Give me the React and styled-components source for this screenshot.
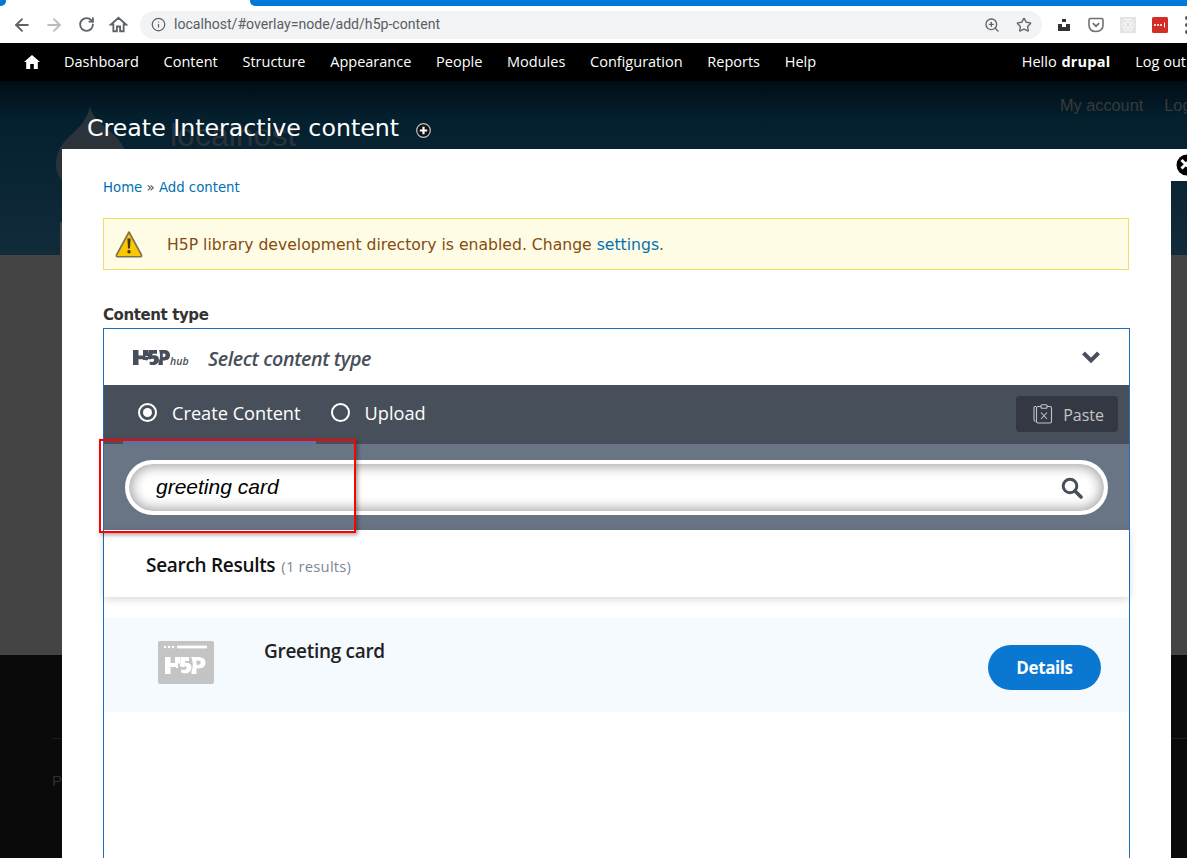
import React from 'react';
import styled, { createGlobalStyle } from 'styled-components';
import { ArrowLeft, ArrowRight, RotateCw, Info, ZoomIn, Star } from 'lucide-react';

const GlobalStyle = createGlobalStyle`
  html, body {
    margin: 0;
    padding: 0;
    height: 858px;
    overflow: hidden;
    background: #0a0a0a;
  }
  * { box-sizing: border-box; }
`;

const navItems = ['Dashboard', 'Content', 'Structure', 'Appearance', 'People', 'Modules', 'Configuration', 'Reports', 'Help'];

const HomeSolid = () => (
  <svg width="16" height="14" viewBox="0 0 16 14">
    <path fill="#fff" d="M8 0 L16 7 L13.8 7 L13.8 14 L9.8 14 L9.8 9 L6.2 9 L6.2 14 L2.2 14 L2.2 7 L0 7 Z" />
  </svg>
);

const HomeOutline = () => (
  <svg width="19" height="19" viewBox="0 0 24 24" fill="none" stroke="#5f6368" strokeWidth="2.3" strokeLinejoin="miter">
    <path d="M10 20.5V14.5H14V20.5H18.5V12H21.5L12 3.5L2.5 12H5.5V20.5Z" />
  </svg>
);

const PlusCircle = () => (
  <svg width="15" height="15" viewBox="0 0 15 15">
    <circle cx="7.5" cy="7.5" r="6.8" fill="#111" stroke="#c4c4c4" strokeWidth="1.2" />
    <path d="M7.5 3.8V11.2M3.8 7.5H11.2" stroke="#fff" strokeWidth="2.2" />
  </svg>
);

const CloseIcon = () => (
  <svg width="26" height="26" viewBox="0 0 26 26">
    <circle cx="11" cy="12" r="10.5" fill="#000" />
    <path d="M5.5 7L14 15.5M14 7L5.5 15.5" stroke="#fff" strokeWidth="3" />
  </svg>
);

const WarningIcon = () => (
  <svg width="28" height="27" viewBox="0 0 28 27">
    <path d="M14 1 L26.5 24 Q27 25.7 25.5 25.7 L2.5 25.7 Q1 25.7 1.5 24 Z" fill="#fdc700" stroke="#7a7550" strokeWidth="1.6" strokeLinejoin="round" />
    <path d="M12.4 7.5H15.6L15 17.5H13Z" fill="#3a3a2a" />
    <circle cx="14" cy="20.8" r="1.7" fill="#3a3a2a" />
  </svg>
);

const DrupalDrop = () => (
  <svg width="80" height="90" viewBox="0 0 80 90">
    <path fill="#2a3339" d="M34 0C36 12 46 18 56 27C66 36 72 46 72 58C72 76 54 90 36 90C18 90 0 76 0 58C0 46 6 37 15 29C24 21 32 12 34 0Z" />
  </svg>
);

const HubLogo = () => (
  <svg width="58" height="20" viewBox="0 0 58 20">
    <path fill="#474f5a" d="M0 2H5.5V7.6H10V2H15V8H12.5V12H10V11.2H5.5V17H0Z" />
    <path fill="#474f5a" d="M15.5 2H24V5.8H19.6L19.3 7.6C22.6 6.6 26 8 26 11.6C26 15.6 22.5 17.6 18.6 17L16.5 16.4L16.8 13.4C18.6 14.2 21 14.2 21.2 12C21.3 10.4 18.8 10.2 16.8 11.4L14.5 10.6Z" />
    <circle cx="13.5" cy="10.6" r="1.9" fill="#474f5a" />
    <path fill="#474f5a" d="M26 2H31C35 2 37 4 37 7.2C37 10.6 34.8 12.4 31.5 12.4H29.8V17H25.5V13.5C27.5 11 27.5 6 26 2ZM29.8 5.4V9H30.4C31.8 9 32.6 8.4 32.6 7.2C32.6 6 31.8 5.4 30.4 5.4Z" />
    <text x="37" y="17" fontFamily="'Open Sans', sans-serif" fontSize="10.5" fontStyle="italic" fontWeight="600" fill="#474f5a">hub</text>
  </svg>
);

const LibraryIcon = () => (
  <svg width="56" height="43" viewBox="0 0 56 43">
    <rect x="0" y="0" width="56" height="43" rx="2" fill="#c4c4c4" />
    <circle cx="7" cy="6" r="1.3" fill="#fff" />
    <circle cx="11" cy="6" r="1.3" fill="#fff" />
    <circle cx="15" cy="6" r="1.3" fill="#fff" />
    <rect x="19" y="4.6" width="30" height="2.8" fill="#fff" />
    <path fill="#fff" d="M7 16H12.5V22H17V16H22V22.5H20V27H18V26H12.5V33H7Z" />
    <path fill="#fff" d="M22.5 16H31V20H27.2L27 22C30 21 33.5 22.4 33.5 26.2C33.5 30.4 30 32.6 26 32.2L23 31.4L23.4 28.2C25.4 29 28.5 29.2 28.7 27C28.8 25.4 26.5 25.2 24.4 26.2L22 25.2Z" />
    <path fill="#fff" d="M33 16H40C45 16 47.5 18.2 47.5 21.6C47.5 25.4 45 27.4 41 27.4H38.5V33H33.5V30C35.5 26 35 20 33 16ZM38.5 19.6V23.8H40C41.6 23.8 42.6 23.2 42.6 21.7C42.6 20.3 41.6 19.6 40 19.6Z" />
  </svg>
);

const PasteIcon = () => (
  <svg width="20" height="20" viewBox="0 0 20 20" fill="none" stroke="#c4c4c4" strokeWidth="1.1">
    <path d="M3 2.5H2Q1 2.5 1 3.5V15.5Q1 17 2.5 17.5" />
    <rect x="3.5" y="2.5" width="15" height="16.5" rx="1.5" />
    <rect x="8" y="0.7" width="6" height="3.6" rx="1" fill="#333842" />
    <path d="M8 8.5L14 15M14 8.5L8 15" />
  </svg>
);

const PocketIcon = () => (
  <svg width="16" height="16" viewBox="0 0 16 16">
    <path d="M1 3Q1 1.5 2.5 1.5H13.5Q15 1.5 15 3V8Q15 14.5 8 14.5Q1 14.5 1 8Z" fill="none" stroke="#707070" strokeWidth="1.6" />
    <path d="M4.8 6.2L8 9.2L11.2 6.2" fill="none" stroke="#707070" strokeWidth="1.8" />
  </svg>
);

const InboxIcon = () => (
  <svg width="14" height="14" viewBox="0 0 14 14">
    <path fill="#333" d="M5 1H9V4H5ZM1 7H5V9H9V7H13V13H1Z" />
    <path fill="#333" d="M1 6H5V7H1ZM9 6H13V7H9Z" />
  </svg>
);

const AtomIcon = () => (
  <svg width="16" height="16" viewBox="0 0 16 16">
    <rect width="16" height="16" fill="#e4e4e4" />
    <g fill="none" stroke="#f6f6f6" strokeWidth="1">
      <ellipse cx="8" cy="8" rx="6.5" ry="2.6" />
      <ellipse cx="8" cy="8" rx="6.5" ry="2.6" transform="rotate(60 8 8)" />
      <ellipse cx="8" cy="8" rx="6.5" ry="2.6" transform="rotate(120 8 8)" />
    </g>
  </svg>
);

const PassIcon = () => (
  <svg width="16" height="16" viewBox="0 0 16 16">
    <rect width="16" height="16" rx="1.5" fill="#d32d27" />
    <circle cx="3" cy="8" r="1.1" fill="#fff" />
    <circle cx="6" cy="8" r="1.1" fill="#fff" />
    <circle cx="9" cy="8" r="1.1" fill="#fff" />
    <rect x="12" y="5.5" width="1" height="5" fill="#fff" />
  </svg>
);

const ChevronIcon = () => (
  <svg width="20" height="14" viewBox="0 0 20 14" fill="none" stroke="#474f5a" strokeWidth="4">
    <path d="M2.5 3L10 10.5L17.5 3" />
  </svg>
);

const SearchIcon = () => (
  <svg width="22" height="22" viewBox="0 0 22 22" fill="none" stroke="#474f5a">
    <circle cx="9" cy="9" r="6.8" strokeWidth="3" />
    <path d="M14 14L20 20" strokeWidth="3.6" strokeLinecap="round" />
  </svg>
);

const App = () => (
  <>
    <GlobalStyle />
    <Page>
      <TabStrip>
        <TabCorner />
        <TabRest />
      </TabStrip>
      <Toolbar>
        <ToolIcon><ArrowLeft size={20} color="#5f6368" strokeWidth={2.3} /></ToolIcon>
        <ToolIcon><ArrowRight size={20} color="#bdbdbd" strokeWidth={2.3} /></ToolIcon>
        <ToolIcon><RotateCw size={17} color="#5f6368" strokeWidth={2.6} /></ToolIcon>
        <ToolIcon><HomeOutline /></ToolIcon>
        <Omnibox>
          <Info size={15} color="#5f6368" strokeWidth={2} />
          <Url>localhost/#overlay=node/add/h5p-content</Url>
          <OmniEnd>
            <ZoomIn size={16} color="#5f6368" strokeWidth={2} />
            <Star size={16} color="#5f6368" strokeWidth={2} />
          </OmniEnd>
        </Omnibox>
        <Extensions>
          <InboxIcon />
          <PocketIcon />
          <AtomIcon />
          <PassIcon />
        </Extensions>
        <MenuDots><i /><i /><i /></MenuDots>
      </Toolbar>

      <AdminBar>
        <AdminHome><HomeSolid /></AdminHome>
        {navItems.map((item) => <AdminLink key={item}>{item}</AdminLink>)}
        <AdminRight>
          <AdminLink>Hello <strong>drupal</strong></AdminLink>
          <AdminLink>Log out</AdminLink>
        </AdminRight>
      </AdminBar>

      <Backdrop>
        <SiteHeader>
          <SiteDrop><DrupalDrop /></SiteDrop>
          <SiteName>localhost</SiteName>
          <SiteLinks>
            <span>My account</span>
            <span>Log out</span>
          </SiteLinks>
          <HeaderTail />
        </SiteHeader>
        <GrayBand />
        <SiteFooter>
          <FooterRule />
          <FooterText>P</FooterText>
        </SiteFooter>
      </Backdrop>

      <OverlayTitle>Create Interactive content <PlusCircle /></OverlayTitle>
      <CloseTab><CloseIcon /></CloseTab>

      <Modal>
        <Breadcrumb><a>Home</a> » <a>Add content</a></Breadcrumb>
        <Message>
          <WarningIcon />
          <MessageText>H5P library development directory is enabled. Change <a>settings</a>.</MessageText>
        </Message>
        <FieldLabel>Content type</FieldLabel>
        <Hub>
          <HubHeader>
            <HubLogo />
            <HubTitle>Select content type</HubTitle>
            <ChevronIcon />
          </HubHeader>
          <TabBar>
            <RadioTab>
              <Radio $checked />
              Create Content
            </RadioTab>
            <RadioTab>
              <Radio />
              Upload
            </RadioTab>
            <PasteButton><PasteIcon /><PasteLabel>Paste</PasteLabel></PasteButton>
            <TabUnderline />
          </TabBar>
          <SearchBand>
            <SearchPill>
              <SearchValue>greeting card</SearchValue>
              <SearchIcon />
            </SearchPill>
          </SearchBand>
          <ResultsHead>
            Search Results <ResultCount>(1 results)</ResultCount>
          </ResultsHead>
          <ResultRow>
            <ResultIcon><LibraryIcon /></ResultIcon>
            <ResultName>Greeting card</ResultName>
            <DetailsButton>Details</DetailsButton>
          </ResultRow>
        </Hub>
      </Modal>

      <Callout />
    </Page>
  </>
);

const Page = styled.div`
  position: relative;
  width: 1187px;
  height: 858px;
  overflow: hidden;
  font-family: 'Open Sans', sans-serif;
`;

const TabStrip = styled.div`
  display: flex;
  justify-content: space-between;
  height: 6px;
  background: #fff;
`;

const TabCorner = styled.div`
  width: 6px;
  background: #0078d7;
  border-radius: 0 0 5px 0;
`;

const TabRest = styled.div`
  width: 937px;
  background: #0078d7;
  border-radius: 0 0 0 5px;
`;

const Toolbar = styled.div`
  display: flex;
  align-items: center;
  height: 37px;
  padding: 0 0 0 6px;
  background: #fff;
`;

const ToolIcon = styled.span`
  display: flex;
  flex: none;
  justify-content: center;
  width: 32px;
`;

const Omnibox = styled.div`
  display: flex;
  align-items: center;
  flex: none;
  width: 902px;
  height: 28px;
  margin-left: 6px;
  padding: 0 10px 0 11px;
  border-radius: 14px;
  background: #f1f3f4;
`;

const Url = styled.span`
  margin-left: 8px;
  padding-bottom: 2px;
  font: 14.1px 'Roboto', sans-serif;
  color: #5a5d62;
`;

const OmniEnd = styled.span`
  display: flex;
  align-items: center;
  gap: 16px;
  margin-left: auto;
`;

const Extensions = styled.div`
  display: flex;
  flex: none;
  align-items: center;
  gap: 16px;
  margin-left: 15px;

  svg:first-child { margin-right: 1px; }
`;

const MenuDots = styled.div`
  display: flex;
  flex: none;
  flex-direction: column;
  gap: 3px;
  margin-left: 17px;

  i {
    display: block;
    width: 4px;
    height: 4px;
    background: #555;
    border-radius: 50%;
  }
`;

const AdminBar = styled.nav`
  display: flex;
  align-items: center;
  height: 38px;
  padding: 0 0 2px 24px;
  background: #000;
  gap: 24.75px;
`;

const AdminHome = styled.span`
  display: flex;
  margin-right: -0.75px;
  padding-top: 2px;
`;

const AdminLink = styled.span`
  font: 14.5px 'Open Sans', sans-serif;
  color: #fff;
  white-space: nowrap;

  strong {
    margin-left: 1px;
    font-weight: 700;
    letter-spacing: 0.2px;
  }
`;

const AdminRight = styled.div`
  display: flex;
  gap: 25px;
  margin-left: auto;
  margin-right: 1px;
`;

const Backdrop = styled.div`
  display: flex;
  flex-direction: column;
  height: 777px;
`;

const SiteHeader = styled.header`
  position: relative;
  height: 174px;
  background: linear-gradient(#010d14, #04202f 22%, #122b3a 100%);
  overflow: hidden;
`;

const SiteDrop = styled.div`
  position: absolute;
  left: 56px;
  top: 25px;
  display: flex;
`;

const HeaderTail = styled.div`
  position: absolute;
  left: 60px;
  top: 141px;
  width: 2px;
  height: 33px;
  background: #444;
`;

const SiteName = styled.div`
  position: absolute;
  left: 170px;
  top: 36px;
  font: 32px 'Liberation Sans', sans-serif;
  color: #2b3238;
`;

const SiteLinks = styled.div`
  position: absolute;
  top: 15px;
  left: 1060px;
  display: flex;
  gap: 21px;
  font: 16.3px 'Liberation Sans', sans-serif;
  color: #3a3a3a;
  white-space: nowrap;
`;

const GrayBand = styled.div`
  height: 400px;
  background: #444;
`;

const SiteFooter = styled.footer`
  flex: 1;
  padding: 83px 0 0 52px;
  background: #0a0a0a;
`;

const FooterRule = styled.div`
  height: 1px;
  background: #1d1d1d;
`;

const FooterText = styled.div`
  margin-top: 33px;
  font: 15px 'Liberation Sans', sans-serif;
  color: #2a2e33;
`;

const OverlayTitle = styled.h1`
  position: absolute;
  left: 87px;
  top: 114px;
  display: flex;
  align-items: center;
  gap: 17px;
  margin: 0;
  font: 400 23.7px 'DejaVu Sans', sans-serif;
  color: #fff;
  white-space: nowrap;

  svg { margin-top: 4px; }
`;

const CloseTab = styled.div`
  position: absolute;
  left: 1171px;
  top: 149px;
  width: 16px;
  height: 32px;
  background: #fff;
  overflow: hidden;
  padding: 4px 0 0 5px;
`;

const Modal = styled.main`
  position: absolute;
  left: 62px;
  top: 149px;
  width: 1109px;
  height: 709px;
  padding: 31px 41px 0;
  background: #fff;
`;

const Breadcrumb = styled.div`
  font: 13.3px 'DejaVu Sans', sans-serif;
  line-height: 16px;
  color: #444;

  a { color: #0071b3; }
`;

const Message = styled.div`
  display: flex;
  align-items: center;
  gap: 24px;
  height: 52px;
  margin: 22px 1px 0 0;
  padding: 0 0 0 11px;
  background: #fffce5;
  border: 1px solid #ede06a;
`;

const MessageText = styled.div`
  padding-top: 1px;
  font: 15.65px 'DejaVu Sans', sans-serif;
  color: #844c10;
  white-space: nowrap;

  a { color: #0071b3; }
`;

const FieldLabel = styled.label`
  display: block;
  margin-top: 36px;
  font: 700 15px 'DejaVu Sans', sans-serif;
  letter-spacing: -0.4px;
  line-height: 18px;
  color: #333;
`;

const Hub = styled.section`
  width: 1027px;
  height: 600px;
  margin-top: 4px;
  border: 1px solid #1f6fc0;
  border-bottom: 0;
`;

const HubHeader = styled.div`
  display: flex;
  align-items: center;
  height: 56px;
  padding: 0 28px 0 29px;

  svg:first-child { margin-top: 2px; }
  svg:last-child { margin-left: auto; }
`;

const HubTitle = styled.span`
  margin-left: 17px;
  padding-top: 2px;
  font: italic 600 19.7px 'Open Sans', sans-serif;
  letter-spacing: -0.4px;
  color: #474f5a;
`;

const TabBar = styled.div`
  position: relative;
  display: flex;
  align-items: center;
  gap: 30px;
  height: 59px;
  padding: 0 11px 4px 34px;
  background: #474f5a;
`;

const RadioTab = styled.span`
  display: flex;
  align-items: center;
  gap: 15px;
  font: 18.2px 'Open Sans', sans-serif;
  color: #fff;
`;

const Radio = styled.span`
  display: flex;
  align-items: center;
  justify-content: center;
  width: 19px;
  height: 19px;
  border: 2px solid #fff;
  border-radius: 50%;

  &::after {
    content: '';
    display: ${(p) => (p.$checked ? 'block' : 'none')};
    width: 9px;
    height: 9px;
    background: #fff;
    border-radius: 50%;
  }
`;

const PasteButton = styled.span`
  display: flex;
  align-items: center;
  gap: 10px;
  height: 36px;
  margin: 3px 0 0 auto;
  padding: 0 14px 0 17px;
  border-radius: 4px;
  background: #333842;
  font: 16px 'Open Sans', sans-serif;
  color: #c4c4c4;
`;

const PasteLabel = styled.span`
  padding-top: 2px;
`;

const TabUnderline = styled.span`
  position: absolute;
  left: 19px;
  bottom: 0;
  width: 193px;
  height: 3px;
  background: #4d78ad;
`;

const SearchBand = styled.div`
  display: flex;
  align-items: flex-start;
  height: 86px;
  padding: 16px 21px;
  background: #697585;
`;

const SearchPill = styled.div`
  display: flex;
  align-items: center;
  justify-content: space-between;
  width: 983px;
  height: 55px;
  padding: 0 21px 0 27px;
  border: 4px solid #fff;
  border-radius: 28px;
  background: #fff;
  box-shadow: inset 0 0 12px 3px #aaa;
`;

const SearchValue = styled.span`
  padding-bottom: 2px;
  font: italic 21px 'Liberation Sans', sans-serif;
  color: #000;
`;

const ResultsHead = styled.div`
  position: relative;
  display: flex;
  align-items: baseline;
  gap: 6px;
  height: 67px;
  padding: 22px 0 0 42px;
  font: 600 19px 'Open Sans', sans-serif;
  letter-spacing: -0.3px;
  color: #111;
  box-shadow: 0 2px 8px rgba(0, 0, 0, 0.16);
`;

const ResultCount = styled.span`
  font: 400 14.8px 'Open Sans', sans-serif;
  letter-spacing: 0.2px;
  color: #7d8794;
`;

const ResultRow = styled.div`
  display: flex;
  align-items: flex-start;
  height: 94px;
  margin-top: 21px;
  padding: 23px 28px 0 54px;
  background: #f5faff;
`;

const ResultIcon = styled.span`
  display: flex;
`;

const ResultName = styled.span`
  margin: -3px 0 0 50px;
  font: 600 19px 'Open Sans', sans-serif;
  letter-spacing: -0.3px;
  color: #222;
`;

const DetailsButton = styled.span`
  display: flex;
  align-items: center;
  justify-content: center;
  width: 113px;
  height: 45px;
  margin: 4px 0 0 auto;
  border-radius: 23px;
  background: #0a78d1;
  font: 700 17px 'Open Sans', sans-serif;
  letter-spacing: -0.4px;
  color: #fff;
`;

const Callout = styled.div`
  position: absolute;
  left: 99px;
  top: 439px;
  width: 257px;
  height: 94px;
  border: 2px solid #f00;
  box-shadow: 2px 2px 4px rgba(0, 0, 0, 0.35);
`;

export default App;
